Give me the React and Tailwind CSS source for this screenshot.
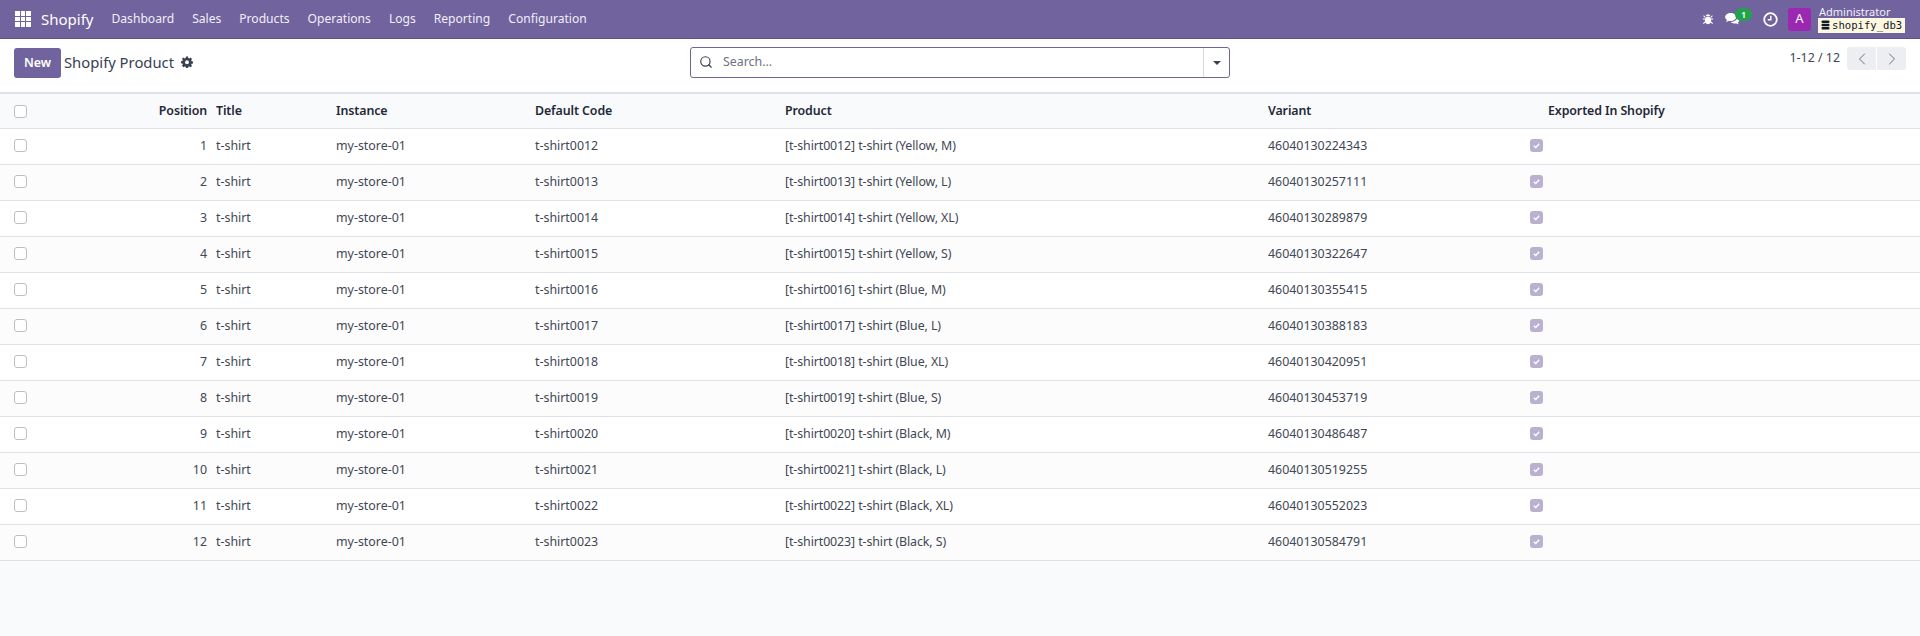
import React from "react";
import { ChevronLeft, ChevronRight, Search } from "lucide-react";

const rows = [
  ["1", "t-shirt0012", "Yellow, M", "46040130224343"],
  ["2", "t-shirt0013", "Yellow, L", "46040130257111"],
  ["3", "t-shirt0014", "Yellow, XL", "46040130289879"],
  ["4", "t-shirt0015", "Yellow, S", "46040130322647"],
  ["5", "t-shirt0016", "Blue, M", "46040130355415"],
  ["6", "t-shirt0017", "Blue, L", "46040130388183"],
  ["7", "t-shirt0018", "Blue, XL", "46040130420951"],
  ["8", "t-shirt0019", "Blue, S", "46040130453719"],
  ["9", "t-shirt0020", "Black, M", "46040130486487"],
  ["10", "t-shirt0021", "Black, L", "46040130519255"],
  ["11", "t-shirt0022", "Black, XL", "46040130552023"],
  ["12", "t-shirt0023", "Black, S", "46040130584791"],
];

const menu = ["Dashboard", "Sales", "Products", "Operations", "Logs", "Reporting", "Configuration"];

function Box() {
  return <span className="block w-[13px] h-[13px] rounded-[3px] border border-[#bcc0c5] bg-white" />;
}

function Checked() {
  return (
    <span className="flex items-center justify-center w-[13px] h-[13px] rounded-[3px] bg-[#b9b1cf]">
      <svg width="9" height="9" viewBox="0 0 10 10" fill="none">
        <path d="M2 5.200 4.200 7.200 8 3" stroke="#fff" strokeWidth="1.600" />
      </svg>
    </span>
  );
}

function Bug() {
  return (
    <svg width="12" height="12" viewBox="0 0 14 14" fill="#fff">
      <ellipse cx="7" cy="8.500" rx="3.600" ry="4.500" />
      <path d="M4.500 3.600a2.500 2.200 0 0 1 5 0z" />
      <path d="M3.500 7H1M10.500 7H13M3.700 10.500 1.500 12.500M10.300 10.500l2.200 2M3.800 5 1.800 3M10.200 5l2-2" stroke="#fff" strokeWidth="1.200" />
    </svg>
  );
}

function Chat() {
  return (
    <svg width="18" height="14" viewBox="0 0 18 15" fill="#fff">
      <path d="M6.500 1C3.200 1 .6 2.900.6 5.300c0 1.300.8 2.500 2 3.300-.2.8-.7 1.400-1.200 2 1.200-.1 2.400-.6 3.200-1.200.6.1 1.200.2 1.900.2 3.300 0 5.900-1.900 5.900-4.300S9.800 1 6.500 1z" />
      <path d="M13.600 4.400c.1.3.1.6.1.9 0 3-3 5.300-6.700 5.300h-.4c1 1 2.600 1.600 4.300 1.600.5 0 1-.1 1.500-.2.8.6 1.800 1 2.900 1.100-.5-.5-.9-1.100-1.100-1.800 1.100-.7 1.800-1.800 1.800-3 0-1.600-1-3-2.400-3.900z" />
    </svg>
  );
}

function Clock() {
  return (
    <svg width="15" height="15" viewBox="0 0 15 15" fill="none" stroke="#fff">
      <circle cx="7.500" cy="7.500" r="6.300" strokeWidth="1.800" />
      <path d="M7.800 3.800v4H4.800" strokeWidth="1.400" />
    </svg>
  );
}

function Cog() {
  return (
    <svg width="12" height="12" viewBox="0 0 12 12" fill="#374151">
      <path fillRule="evenodd" d="M5 .5h2l.3 1.500 1 .4L9.600 1.600 11 3l-.8 1.300.4 1 1.500.3v1.900l-1.500.3-.4 1 .8 1.300L9.600 11.200l-1.300-.8-1 .4-.3 1.500H5l-.3-1.500-1-.4-1.300.8L1 9.800l.8-1.300-.4-1L0 7.200V5.300l1.400-.3.4-1L1 2.700 2.400 1.600l1.300.8 1-.4zM6 4.300a2 2 0 1 0 0 4 2 2 0 0 0 0-4z" />
    </svg>
  );
}

function Db() {
  return (
    <svg width="9" height="10" viewBox="0 0 9 10" fill="#111827" className="shrink-0">
      <rect x="0.500" y="0.500" width="8" height="2.500" rx="1" />
      <rect x="0.500" y="3.700" width="8" height="2.500" rx="1" />
      <rect x="0.500" y="6.900" width="8" height="2.500" rx="1" />
    </svg>
  );
}

function Grid() {
  return (
    <span className="grid grid-cols-3 gap-[1px] w-[16px] h-[16px]">
      {Array.from({ length: 9 }).map((_, i) => (
        <span key={i} className="bg-white" />
      ))}
    </span>
  );
}

export default function App() {
  return (
    <div className="min-h-[636px] bg-[#f9fafb] text-[12.4px] text-[#3f4754] font-['Noto_Sans','Open_Sans',sans-serif]">
      <header className="h-[39px] bg-[#71639e] border-b border-[#5f5388] flex items-center text-white">
        <span className="ml-[15px]"><Grid /></span>
        <span className="ml-[10px] text-[15px]">Shopify</span>
        <nav className="flex ml-[18px] gap-[18px] text-[12.1px] text-[#f1eff6]">
          {menu.map((m) => (
            <span key={m}>{m}</span>
          ))}
        </nav>
        <div className="ml-auto flex items-center">
          <Bug />
          <span className="relative ml-[10px] flex">
            <Chat />
            <span className="absolute -top-[4px] left-[11px] w-[17px] h-[13px] rounded-full bg-[#22a24a] text-[8px] leading-[13px] text-center font-bold">1</span>
          </span>
          <span className="ml-[21px] flex"><Clock /></span>
          <span className="ml-[10px] w-[23px] h-[23px] rounded-[3px] bg-[#9c27b0] flex items-center justify-center text-[13px]">A</span>
          <div className="ml-[7px] mr-[15px] w-[87px] flex flex-col">
            <span className="text-[11px] leading-[11px] text-[#f1eff6] pl-[1px]">Administrator</span>
            <span className="mt-[1px] h-[15px] bg-[#fff8e1] text-[#111827] text-[10.6px] leading-[15px] pl-[3px] font-['DejaVu_Sans_Mono',monospace] whitespace-nowrap flex items-center gap-[2px]"><Db />shopify_db3</span>
          </div>
        </div>
      </header>

      <div className="h-[53px] bg-white flex items-start">
        <div className="flex items-center mt-[9px] ml-[14px] w-[676px]">
          <button className="w-[47px] h-[30px] bg-[#71639e] rounded-[3px] text-white font-semibold text-[12.4px]">New</button>
          <span className="ml-[3px] mb-[2px] text-[14.8px] text-[#374151]">Shopify Product</span>
          <span className="ml-[7px] mb-[2px] flex"><Cog /></span>
        </div>
        <div className="mt-[8px] w-[540px] h-[31px] border border-[#71639e] rounded-[3px] flex items-center bg-white">
          <Search size={14} strokeWidth={2} className="ml-[8px] mb-[2px] text-[#374151]" />
          <span className="ml-[10px] text-[#6b7280] flex-1">Search...</span>
          <span className="w-[26px] h-full border-l border-[#d8dadd] flex items-center justify-center">
            <span className="w-0 h-0 border-l-[4px] border-r-[4px] border-t-[4px] border-l-transparent border-r-transparent border-t-[#374151]" />
          </span>
        </div>
        <div className="ml-auto mt-[8px] mr-[14px] flex items-center">
          <span>1-12 / 12</span>
          <span className="ml-[7px] flex h-[23px] gap-[1px]">
            <span className="w-[29px] bg-[#eceef1] rounded-l-[3px] flex items-center justify-center"><ChevronLeft size={20} strokeWidth={1.200} className="text-[#6b7280]" /></span>
            <span className="w-[29px] bg-[#eceef1] rounded-r-[3px] flex items-center justify-center"><ChevronRight size={20} strokeWidth={1.200} className="text-[#6b7280]" /></span>
          </span>
        </div>
      </div>

      <table className="w-full table-fixed border-collapse border-t-2 border-[#dee2e6]">
        <colgroup>
          <col className="w-[38px]" />
          <col className="w-[173px]" />
          <col className="w-[120px]" />
          <col className="w-[199px]" />
          <col className="w-[251px]" />
          <col className="w-[483px]" />
          <col className="w-[262px]" />
          <col />
        </colgroup>
        <thead>
          <tr className="h-[35px] bg-[#f9fafb] border-b border-[#dee2e6] text-[#1f2937] text-left tracking-[-0.1px]">
            <th className="pl-[14px] pt-[2px] font-semibold"><Box /></th>
            <th className="text-right font-semibold pt-[2px] pr-[4px]">Position</th>
            <th className="pl-[5px] pt-[2px] font-semibold">Title</th>
            <th className="pl-[5px] pt-[2px] font-semibold">Instance</th>
            <th className="pl-[5px] pt-[2px] font-semibold">Default Code</th>
            <th className="pl-[4px] pt-[2px] font-semibold">Product</th>
            <th className="pl-[4px] pt-[2px] font-semibold">Variant</th>
            <th className="pl-[22px] pt-[2px] font-semibold">Exported In Shopify</th>
          </tr>
        </thead>
        <tbody>
          {rows.map(([n, code, opt, v], i) => (
            <tr key={n} className={`h-[36px] border-b border-[#dee2e6] ${i % 2 ? "bg-[#fcfcfc]" : "bg-white"}`}>
              <td className="pl-[14px]"><span className="block mb-[2px]"><Box /></span></td>
              <td className="text-right pr-[4px]">{n}</td>
              <td className="pl-[5px]">t-shirt</td>
              <td className="pl-[5px]">my-store-01</td>
              <td className="pl-[5px]">{code}</td>
              <td className="pl-[4px] tracking-[-0.1px]">[{code}] t-shirt ({opt})</td>
              <td className="pl-[4px]">{v}</td>
              <td><span className="block ml-[4px] mb-[2px]"><Checked /></span></td>
            </tr>
          ))}
        </tbody>
      </table>
    </div>
  );
}
